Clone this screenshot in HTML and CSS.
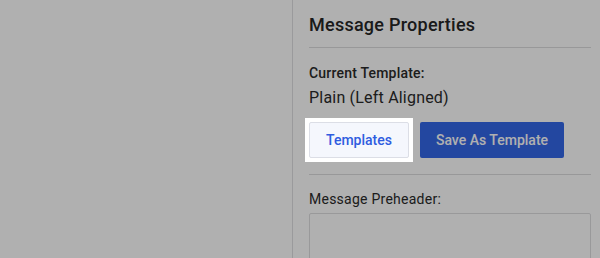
FILE: index.html
```html
<!DOCTYPE html>
<html lang="en">
<head>
<meta charset="utf-8">
<title>Message Properties</title>
<link rel="stylesheet" href="styles.css">
</head>
<body>
<div class="layout">
  <main class="canvas"></main>
  <aside class="panel">
    <h2 class="panel-title">Message Properties</h2>
    <div class="section">
      <div class="label">Current Template:</div>
      <div class="value">Plain (Left Aligned)</div>
      <div class="actions">
        <span class="tour-spotlight">
          <button class="btn btn-secondary" type="button">Templates</button>
        </span>
        <button class="btn btn-primary" type="button">Save As Template</button>
      </div>
    </div>
    <div class="section section-preheader">
      <label class="label label-lg" for="preheader">Message Preheader:</label>
      <textarea id="preheader" class="textarea"></textarea>
    </div>
  </aside>
</div>
<div class="tour-overlay"></div>
</body>
</html>
```
FILE: styles.css
```css
* { box-sizing: border-box; }
html, body { margin: 0; height: 100%; overflow: hidden; }
body {
  font-family: Roboto, "Liberation Sans", Arial, sans-serif;
  color: #2a2a2a;
  background: #ffffff;
}
.layout {
  display: flex;
  height: 100%;
}
.canvas {
  width: 292px;
  flex: none;
}
.panel {
  flex: 1;
  border-left: 1px solid #dfdfe2;
  padding: 14px 9px 0 16px;
}
.panel-title {
  margin: 0;
  font-size: 18px;
  line-height: 21px;
  font-weight: 500;
  letter-spacing: 0.25px;
  color: #262626;
  padding-bottom: 12px;
  border-bottom: 1px solid #dcdcde;
}
.section {
  padding: 17px 0 16px;
  border-bottom: 1px solid #dcdcde;
}
.section-preheader {
  border-bottom: none;
  padding-top: 16px;
}
.label {
  display: block;
  font-size: 14px;
  line-height: 16px;
  font-weight: 500;
  letter-spacing: 0.2px;
  color: #2a2a2a;
}
.label-lg {
  font-weight: 400;
  letter-spacing: 0.25px;
}
.value {
  margin-top: 8px;
  font-size: 16px;
  line-height: 18px;
  letter-spacing: 0.2px;
  color: #2a2a2a;
}
.actions {
  display: flex;
  align-items: center;
  gap: 11px;
  margin-top: 15px;
}
.tour-spotlight {
  position: relative;
  z-index: 20;
  display: block;
  margin: -4px;
  padding: 4px;
  background: #ffffff;
}
.btn {
  display: block;
  height: 36px;
  padding: 0 16px;
  font-family: inherit;
  font-size: 14px;
  font-weight: 500;
  border-radius: 2px;
  cursor: pointer;
}
.btn-secondary {
  background: #f5f7fd;
  color: #2f5ce0;
  border: 1px solid #dcdee6;
}
.btn-primary {
  background: #3467e8;
  color: #ffffff;
  border: none;
  padding: 0 16px;
}
.textarea {
  display: block;
  width: 100%;
  height: 80px;
  margin-top: 6px;
  border: 1px solid #dedee0;
  border-radius: 2px;
  resize: none;
  background: #ffffff;
}
.tour-overlay {
  position: fixed;
  inset: 0;
  background: rgba(0, 0, 0, 0.31);
  z-index: 10;
}
```
